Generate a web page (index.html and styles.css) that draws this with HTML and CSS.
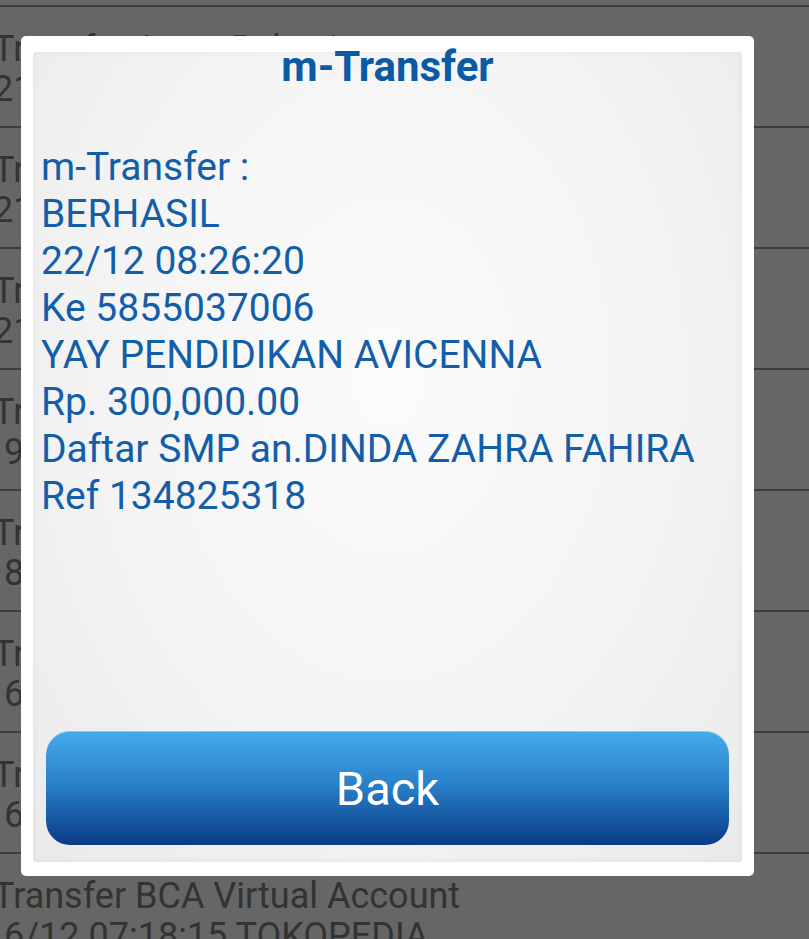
FILE: index.html
```html
<!DOCTYPE html>
<html lang="id">
<head>
<meta charset="utf-8">
<title>m-Transfer</title>
<link rel="stylesheet" href="styles.css">
</head>
<body>
<div class="list">
  <div class="list-cap"></div>
  <div class="row"><div class="l1">Transfer Antar Rekening</div><div class="l2">21/12 10:12:05 BUDI</div></div>
  <div class="row"><div class="l1">Transfer Antar Rekening</div><div class="l2">21/12 09:40:11 SITI</div></div>
  <div class="row"><div class="l1">Transfer Antar Rekening</div><div class="l2">21/12 08:02:44 ANDI</div></div>
  <div class="row"><div class="l1">Transfer Antar Rekening</div><div class="l2 ind">9/12 14:21:09 RINA</div></div>
  <div class="row"><div class="l1">Transfer Antar Rekening</div><div class="l2 ind">8/12 11:05:37 DEWI</div></div>
  <div class="row"><div class="l1">Transfer Antar Rekening</div><div class="l2 ind">6/12 16:48:22 AGUS</div></div>
  <div class="row"><div class="l1">Transfer Antar Rekening</div><div class="l2 ind">6/12 09:30:50 TOKO</div></div>
  <div class="row"><div class="l1">Transfer BCA Virtual Account</div><div class="l2 ind">6/12 07:18:15 TOKOPEDIA</div></div>
</div>

<div class="dialog">
  <div class="panel">
    <div class="title">m-Transfer</div>
    <div class="body">
      <div>m-Transfer :</div>
      <div>BERHASIL</div>
      <div>22/12 08:26:20</div>
      <div>Ke 5855037006</div>
      <div>YAY PENDIDIKAN AVICENNA</div>
      <div>Rp. 300,000.00</div>
      <div>Daftar SMP an.DINDA ZAHRA FAHIRA</div>
      <div>Ref 134825318</div>
    </div>
    <button class="back">Back</button>
  </div>
</div>
</body>
</html>
```

FILE: styles.css
```css
html, body {
  margin: 0;
  padding: 0;
}
body {
  width: 809px;
  height: 939px;
  overflow: hidden;
  background: #666666;
  font-family: Roboto, "Noto Sans", sans-serif;
  position: relative;
}
.list {
  display: flex;
  flex-direction: column;
}
.list-cap {
  height: 5px;
  border-bottom: 2px solid #3d3d3d;
}
.row {
  height: 119px;
  border-bottom: 2px solid #3d3d3d;
  box-sizing: content-box;
  margin-left: -7px;
  color: #333333;
  font-size: 36px;
  line-height: 40px;
  white-space: nowrap;
}
.row .l1 {
  margin-top: 22px;
}
.row .l2.ind {
  padding-left: 11px;
}

.dialog {
  position: absolute;
  left: 21px;
  top: 36px;
  width: 733px;
  height: 840px;
  box-sizing: border-box;
  background: #ffffff;
  border-radius: 5px;
  padding: 16px 12px 14px 12px;
  display: flex;
}
.panel {
  flex: 1;
  display: flex;
  flex-direction: column;
  border-radius: 3px;
  background: radial-gradient(ellipse at 50% 40%, #fbfbfb 0%, #f4f4f4 55%, #eaeaea 100%);
  box-shadow: inset 0 0 6px rgba(0,0,0,0.06);
}
.title {
  text-align: center;
  color: #0b5aa6;
  font-weight: 700;
  font-size: 42px;
  line-height: 30px;
  height: 30px;
}
.body {
  margin-top: 62px;
  padding-left: 8px;
  color: #135ea8;
  font-size: 39px;
  line-height: 47px;
  white-space: nowrap;
}
.back {
  margin: auto 13px 17px 13px;
  height: 114px;
  border: none;
  border-radius: 24px;
  background: linear-gradient(to bottom, #45abe9 0%, #2a82cb 45%, #14549f 80%, #0a3c88 100%);
  box-shadow: inset 0 1px 0 rgba(255,255,255,0.35);
  color: #ffffff;
  font-family: Roboto, "Noto Sans", sans-serif;
  font-size: 47px;
  padding: 0;
}
```
